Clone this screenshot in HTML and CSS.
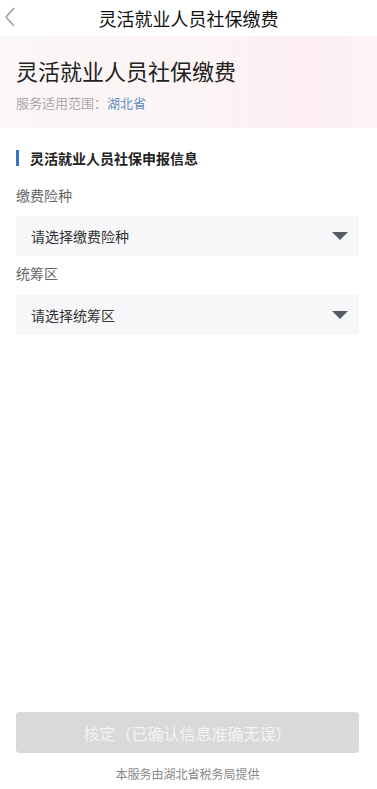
FILE: index.html
```html
<!DOCTYPE html>
<html lang="zh-CN">
<head>
    <meta charset="UTF-8">
    <meta name="viewport" content="width=device-width, initial-scale=1.0">
    <title>灵活就业人员社保缴费</title>
    <link rel="stylesheet" href="styles.css">
</head>
<body>
    <div class="page">
        <div class="navbar">
            <span class="back">
                <svg width="12" height="20" viewBox="0 0 12 20"><path d="M10 1 L2 10 L10 19" fill="none" stroke="#999" stroke-width="1.4"/></svg>
            </span>
            <h1>灵活就业人员社保缴费</h1>
        </div>

        <div class="banner">
            <h2>灵活就业人员社保缴费</h2>
            <p class="scope">服务适用范围：<span class="area">湖北省</span></p>
        </div>

        <div class="form">
            <div class="section-title">灵活就业人员社保申报信息</div>

            <div class="field">
                <label>缴费险种</label>
                <div class="select">
                    <span>请选择缴费险种</span>
                    <span class="arrow"></span>
                </div>
            </div>

            <div class="field">
                <label>统筹区</label>
                <div class="select">
                    <span>请选择统筹区</span>
                    <span class="arrow"></span>
                </div>
            </div>
        </div>

        <div class="bottom">
            <button class="submit" disabled>核定（已确认信息准确无误）</button>
            <p class="provider">本服务由湖北省税务局提供</p>
        </div>
    </div>
</body>
</html>
```

FILE: styles.css
```css
body {
    margin: 0;
    font-family: "Noto Sans CJK SC", "Noto Sans", sans-serif;
    background-color: #fff;
    color: #333;
}

.page {
    width: 377px;
    height: 789px;
    display: flex;
    flex-direction: column;
}

.navbar {
    height: 36px;
    display: flex;
    align-items: center;
    justify-content: center;
    position: relative;
}
.navbar h1 {
    margin: 0;
    font-size: 18px;
    font-weight: 400;
    color: #111;
}
.back {
    position: absolute;
    left: 4px;
    top: 7px;
}

.banner {
    height: 92px;
    padding: 0 16px;
    background: linear-gradient(90deg, #fbf6f7 0%, #fcf4f5 55%, #fdeef1 80%, #fdf3f5 100%);
    display: flex;
    flex-direction: column;
    justify-content: center;
}
.banner h2 {
    margin: 2px 0 0;
    font-size: 22px;
    font-weight: 400;
    color: #222;
    line-height: 32px;
}
.scope {
    margin: 7px 0 0;
    font-size: 13px;
    color: #a8a8a8;
}
.area {
    color: #5b8fc8;
}

.form {
    padding: 22px 18px 0 16px;
    flex: 1;
}
.section-title {
    border-left: 3px solid #3b73c2;
    padding-left: 11px;
    font-size: 14px;
    font-weight: 700;
    color: #222;
    line-height: 16px;
}

.field label {
    display: block;
    font-size: 14px;
    color: #666;
    line-height: 20px;
    margin: 19px 0 11px;
}
.field + .field label {
    margin-top: 7px;
    margin-bottom: 12px;
}
.select {
    height: 40px;
    background-color: #f7f7f9;
    display: flex;
    align-items: center;
    justify-content: space-between;
    padding: 0 11px 0 15px;
    font-size: 14px;
    color: #333;
}
.arrow {
    width: 0;
    height: 0;
    border-left: 8px solid transparent;
    border-right: 8px solid transparent;
    border-top: 8px solid #555b64;
}

.bottom {
    padding: 0 18px 7px 16px;
}
.submit {
    width: 100%;
    height: 41px;
    border: none;
    border-radius: 4px;
    background-color: #d9d9d9;
    color: #f4f4f4;
    font-family: inherit;
    font-size: 16px;
}
.provider {
    margin: 12px 0 0;
    text-align: center;
    font-size: 12px;
    color: #888;
}
```
